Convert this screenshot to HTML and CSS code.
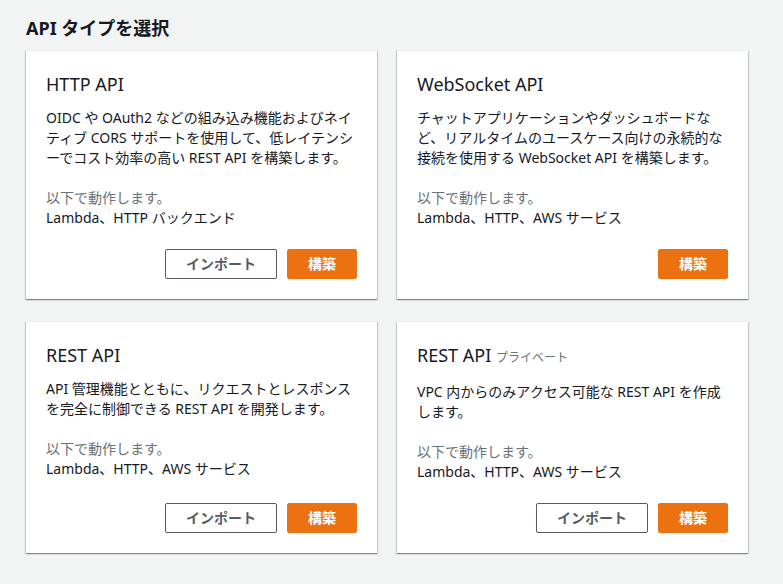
FILE: index.html
```html
<!DOCTYPE html>
<html lang="ja">
<head>
<meta charset="utf-8">
<title>API タイプを選択</title>
<link rel="stylesheet" href="styles.css">
</head>
<body>
<main class="page">
  <h1 class="page-title">API タイプを選択</h1>
  <div class="grid">
    <section class="card">
      <h2 class="card-title">HTTP API</h2>
      <p class="desc">OIDC や OAuth2 などの組み込み機能およびネイティブ CORS サポートを使用して、低レイテンシーでコスト効率の高い REST API を構築します。</p>
      <div class="works">
        <div class="works-label">以下で動作します。</div>
        <div class="works-list">Lambda、HTTP バックエンド</div>
      </div>
      <div class="actions">
        <button class="btn btn-normal">インポート</button>
        <button class="btn btn-primary">構築</button>
      </div>
    </section>
    <section class="card">
      <h2 class="card-title">WebSocket API</h2>
      <p class="desc">チャットアプリケーションやダッシュボードなど、リアルタイムのユースケース向けの永続的な接続を使用する WebSocket API を構築します。</p>
      <div class="works">
        <div class="works-label">以下で動作します。</div>
        <div class="works-list">Lambda、HTTP、AWS サービス</div>
      </div>
      <div class="actions">
        <button class="btn btn-primary">構築</button>
      </div>
    </section>
    <section class="card">
      <h2 class="card-title">REST API</h2>
      <p class="desc">API 管理機能とともに、リクエストとレスポンスを完全に制御できる REST API を開発します。</p>
      <div class="works">
        <div class="works-label">以下で動作します。</div>
        <div class="works-list">Lambda、HTTP、AWS サービス</div>
      </div>
      <div class="actions">
        <button class="btn btn-normal">インポート</button>
        <button class="btn btn-primary">構築</button>
      </div>
    </section>
    <section class="card">
      <h2 class="card-title">REST API <span class="card-sub">プライベート</span></h2>
      <p class="desc">VPC 内からのみアクセス可能な REST API を作成します。</p>
      <div class="works">
        <div class="works-label">以下で動作します。</div>
        <div class="works-list">Lambda、HTTP、AWS サービス</div>
      </div>
      <div class="actions">
        <button class="btn btn-normal">インポート</button>
        <button class="btn btn-primary">構築</button>
      </div>
    </section>
  </div>
</main>
</body>
</html>
```

FILE: styles.css
```css
html, body {
  margin: 0;
  padding: 0;
  background: #f2f3f3;
}
body {
  font-family: "Noto Sans", "Noto Sans CJK JP", sans-serif;
  color: #16191f;
  font-size: 14px;
  line-height: 20px;
}
.page {
  padding: 16px 35px 20px 26px;
}
.page-title {
  margin: 0 0 10px 0;
  font-size: 18px;
  line-height: 24px;
  font-weight: 700;
  color: #16191f;
}
.grid {
  display: grid;
  grid-template-columns: 351px 351px;
  gap: 22px 20px;
}
.card {
  background: #ffffff;
  padding: 20px;
  display: flex;
  flex-direction: column;
  box-shadow: 0 1px 1px 0 rgba(0, 28, 36, 0.3), 1px 1px 1px 0 rgba(0, 28, 36, 0.15), -1px 1px 1px 0 rgba(0, 28, 36, 0.15);
  border-top: 1px solid #eaeded;
  box-sizing: border-box;
}
.card-title {
  margin: -1px 0 0 0;
  font-size: 18px;
  line-height: 28px;
  font-weight: 400;
  color: #16191f;
}
.card-sub {
  font-size: 12px;
  color: #687078;
}
.desc {
  margin: 10px 0 0 0;
}
.works {
  margin-top: 20px;
}
.works-label {
  color: #687078;
}
.actions {
  margin-top: auto;
  padding-top: 21px;
  display: flex;
  justify-content: flex-end;
  gap: 10px;
}
.btn {
  font-family: inherit;
  font-size: 14px;
  line-height: 20px;
  font-weight: 700;
  padding: 4px 20px;
  border-radius: 2px;
  border: 1px solid #545b64;
  cursor: pointer;
}
.btn-normal {
  background: #ffffff;
  color: #545b64;
}
.btn-primary {
  background: #ec7211;
  border-color: #ec7211;
  color: #ffffff;
}
```
